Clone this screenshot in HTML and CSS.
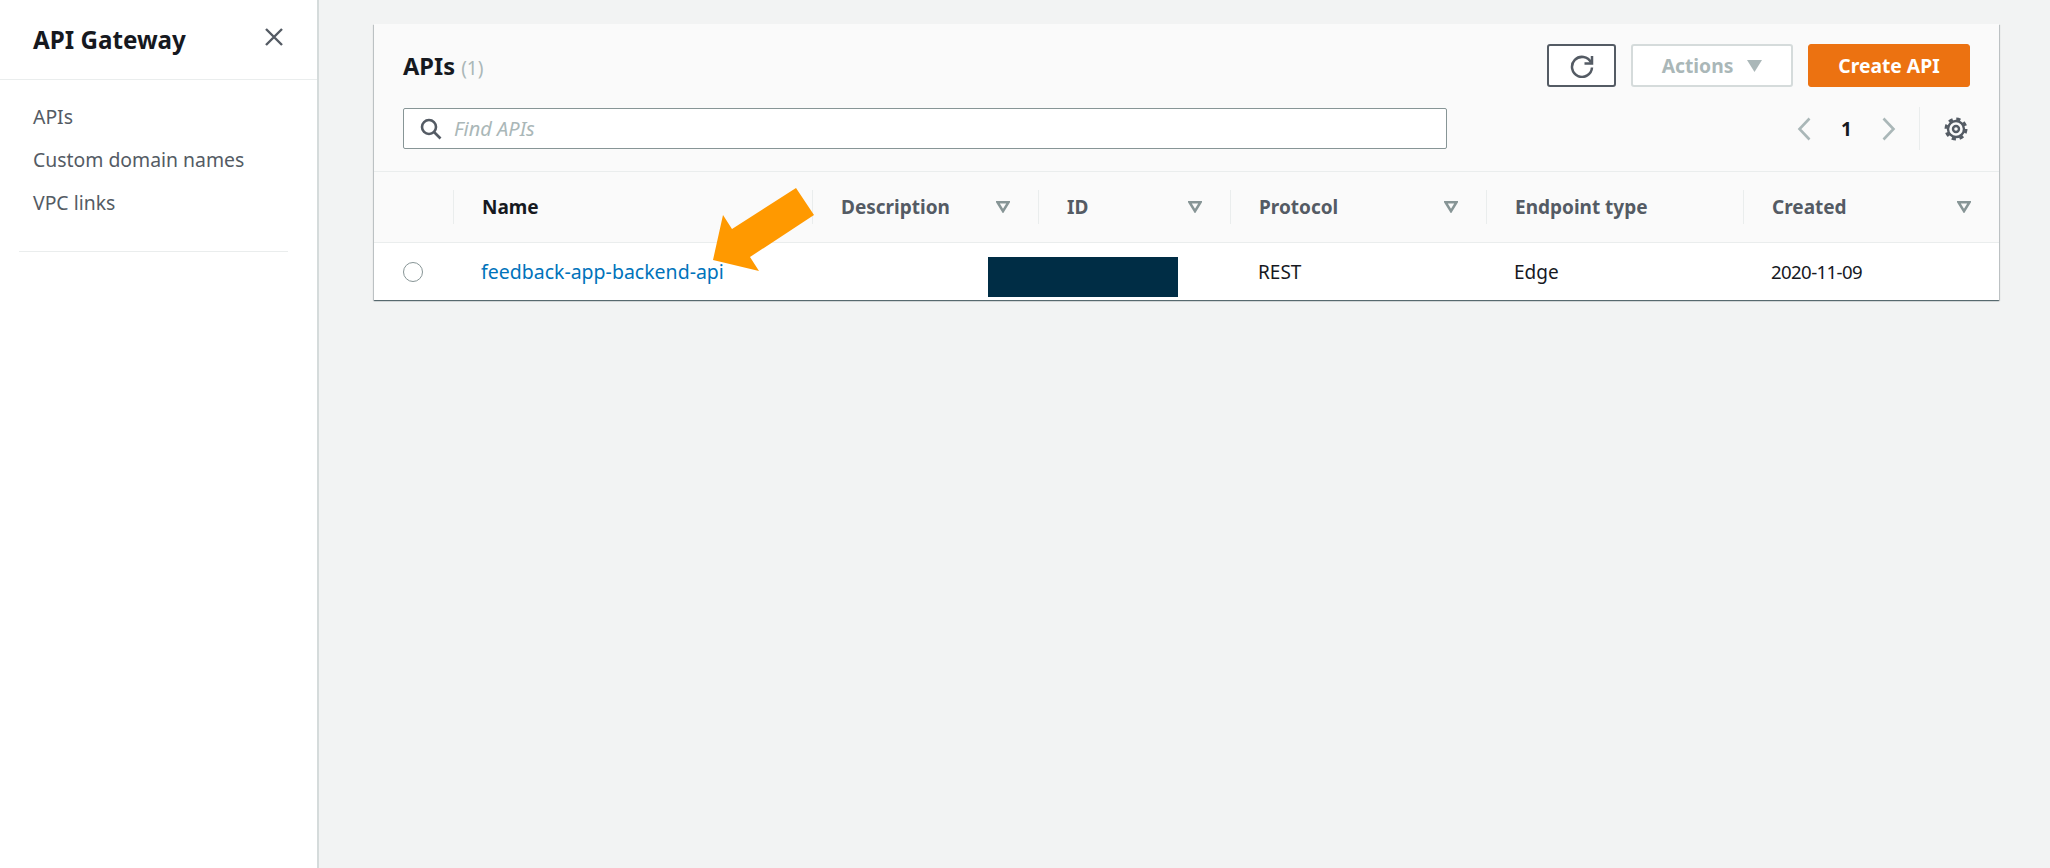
FILE: index.html
```html
<!DOCTYPE html>
<html lang="en">

<head>
  <meta charset="UTF-8">
  <title>API Gateway</title>
  <link rel="stylesheet" href="styles.css">
</head>

<body>
  <aside class="sidebar">
    <div class="side-head">
      <h2>API Gateway</h2>
      <svg class="close" viewBox="0 0 18 18"><path d="M1 1l16 16M17 1L1 17" /></svg>
    </div>
    <nav class="side-nav">
      <a href="#">APIs</a>
      <a href="#">Custom domain names</a>
      <a href="#">VPC links</a>
    </nav>
    <hr class="side-rule">
  </aside>

  <main class="content">
    <section class="panel">
      <div class="panel-head">
        <div class="head-row">
          <h1>APIs <small>(1)</small></h1>
          <div class="actions">
            <button class="btn btn-refresh">
              <svg class="ico" viewBox="0 0 24 24"><path d="M22 2v7.5h-7.5" /><path d="M21 8.5a10 10 0 1 0 1 5" /></svg>
            </button>
            <button class="btn btn-actions">Actions <svg class="caret" viewBox="0 0 15 12"><path d="M0 0h15L7.5 12z" /></svg></button>
            <button class="btn btn-primary">Create API</button>
          </div>
        </div>
        <div class="head-row search-row">
          <label class="search">
            <svg class="search-ico" viewBox="0 0 22 22"><circle cx="9" cy="9" r="7" /><path d="M14 14l6.5 6.5" /></svg>
            <input type="text" placeholder="Find APIs">
          </label>
          <div class="pager">
            <svg class="chev" viewBox="0 0 14 24"><path d="M12.5 1.5L2.5 12l10 10.5" /></svg>
            <b>1</b>
            <svg class="chev" viewBox="0 0 14 24"><path d="M1.5 1.5l10 10.5-10 10.5" /></svg>
            <span class="pager-sep"></span>
            <svg class="gear" viewBox="0 0 24 24"><circle class="gear-ring" cx="12" cy="12" r="8" /><circle class="gear-teeth" cx="12" cy="12" r="10" /><circle class="gear-hub" cx="12" cy="12" r="3" /></svg>
          </div>
        </div>
      </div>

      <table>
        <thead>
          <tr>
            <th class="col-radio"><div class="cell-head"></div></th>
            <th class="col-name"><div class="cell-head dark">Name</div></th>
            <th class="col-desc"><div class="cell-head">Description <svg class="sort" viewBox="0 0 14 12"><path d="M1.5 1.2h11L7 10.2z" /></svg></div></th>
            <th class="col-id"><div class="cell-head">ID <svg class="sort" viewBox="0 0 14 12"><path d="M1.5 1.2h11L7 10.2z" /></svg></div></th>
            <th class="col-proto"><div class="cell-head">Protocol <svg class="sort" viewBox="0 0 14 12"><path d="M1.5 1.2h11L7 10.2z" /></svg></div></th>
            <th class="col-type"><div class="cell-head">Endpoint type</div></th>
            <th class="col-created"><div class="cell-head">Created <svg class="sort" viewBox="0 0 14 12"><path d="M1.5 1.2h11L7 10.2z" /></svg></div></th>
          </tr>
        </thead>
        <tbody>
          <tr>
            <td><span class="radio"></span></td>
            <td><a href="#">feedback-app-backend-api</a></td>
            <td></td>
            <td></td>
            <td>REST</td>
            <td>Edge</td>
            <td class="date">2020-11-09</td>
          </tr>
        </tbody>
      </table>

      <!-- pasted over the screenshot -->
      <div class="redact"></div>
      <svg class="arrow" viewBox="0 0 102 84"><polygon points="84,0 102,27 38,69 47,83 1,72 11,27 20,41" /></svg>
    </section>
  </main>
</body>

</html>
```

FILE: styles.css
```css
* {
  box-sizing: border-box;
}

body {
  margin: 0;
  height: 100vh;
  overflow: hidden;
  display: flex;
  background-color: #f2f3f3;
  color: #16191f;
  font-family: "Noto Sans", Arial, sans-serif;
  font-size: 19px;
}

a {
  text-decoration: none;
}

/* sidebar */
.sidebar {
  width: 319px;
  flex: none;
  background-color: #fff;
  border-right: 2px solid #d5dbdb;
}

.side-head {
  height: 80px;
  padding: 0 33px;
  display: flex;
  align-items: center;
  justify-content: space-between;
  border-bottom: 1px solid #eaeded;
}

.side-head h2 {
  margin: 0;
  font-size: 24.2px;
  font-weight: 700;
}

.close {
  width: 18px;
  height: 18px;
  margin: -6px 1px 0 0;
  fill: none;
  stroke: #545b64;
  stroke-width: 2.4;
}

.side-nav {
  padding-top: 15px;
  display: flex;
  flex-direction: column;
}

.side-nav a {
  height: 43px;
  padding-left: 33px;
  line-height: 43px;
  font-size: 19.4px;
  color: #545b64;
}

.side-rule {
  width: 269px;
  height: 1px;
  margin: 27px 0 0 19px;
  border: 0;
  background-color: #eaeded;
}

/* panel */
.content {
  flex: 1;
  padding: 24px 51px 0 55px;
}

.panel {
  position: relative;
  height: 276px;
  background-color: #fff;
  box-shadow: 0 1px 1px rgba(0, 28, 36, .5), 1px 1px 1px rgba(0, 28, 36, .15), -1px 1px 1px rgba(0, 28, 36, .15);
}

.panel-head {
  height: 148px;
  padding: 20px 29px 0;
  background-color: #fafafa;
  border-bottom: 1px solid #eaeded;
}

.head-row {
  display: flex;
  align-items: center;
  justify-content: space-between;
}

.search-row {
  margin-top: 20px;
}

h1 {
  margin: 0;
  font-size: 23.6px;
  font-weight: 700;
}

h1 small {
  font-size: 19px;
  font-weight: 400;
  color: #aab7b8;
}

.actions {
  display: flex;
  gap: 15px;
}

.btn {
  height: 43px;
  border-radius: 3px;
  font-family: inherit;
  font-size: 19.3px;
  font-weight: 700;
  display: flex;
  align-items: center;
  justify-content: center;
  gap: 14px;
}

.btn-refresh {
  width: 69px;
  background-color: #fff;
  border: 2px solid #545b64;
}

.ico {
  width: 24px;
  height: 24px;
  fill: none;
  stroke: #545b64;
  stroke-width: 2.5;
}

.btn-actions {
  width: 162px;
  background-color: #fff;
  border: 2px solid #d5dbdb;
  color: #aab7b8;
}

.caret {
  width: 15px;
  height: 12px;
  fill: #aab7b8;
}

.btn-primary {
  width: 162px;
  background-color: #ec7211;
  border: 1px solid #ec7211;
  color: #fff;
}

.search {
  width: 1044px;
  height: 41px;
  padding-left: 16px;
  display: flex;
  align-items: center;
  gap: 10px;
  background-color: #fff;
  border: 1px solid #879596;
  border-radius: 2px;
}

.search-ico {
  width: 22px;
  height: 22px;
  fill: none;
  stroke: #545b64;
  stroke-width: 2.6;
}

.search input {
  flex: 1;
  border: 0;
  outline: 0;
  background: none;
  font-family: inherit;
  font-size: 20px;
}

.search input::placeholder {
  color: #aab7b8;
  font-style: italic;
  opacity: 1;
}

.pager {
  display: flex;
  align-items: center;
  height: 43px;
  margin-right: 2px;
}

.chev {
  width: 14px;
  height: 24px;
  fill: none;
  stroke: #aab7b8;
  stroke-width: 2.6;
}

.pager b {
  width: 71px;
  text-align: center;
  font-size: 19px;
}

.pager-sep {
  width: 1px;
  height: 43px;
  margin: 0 24px 0 23px;
  background-color: #eaeded;
}

.gear {
  width: 24px;
  height: 24px;
  fill: none;
  stroke: #545b64;
}

.gear-ring,
.gear-hub {
  stroke-width: 2.4;
}

.gear-teeth {
  stroke-width: 3;
  stroke-dasharray: 4.2 3.65;
}

/* table */
table {
  width: 100%;
  table-layout: fixed;
  border-collapse: collapse;
}

.col-radio {
  width: 79px;
}

.col-name {
  width: 359px;
}

.col-desc {
  width: 226px;
}

.col-id {
  width: 192px;
}

.col-proto {
  width: 256px;
}

.col-type {
  width: 257px;
}

th {
  height: 70px;
  padding: 0;
  background-color: #fafafa;
  border-bottom: 1px solid #eaeded;
  text-align: left;
}

.cell-head {
  height: 34px;
  padding: 0 28px;
  display: flex;
  align-items: center;
  justify-content: space-between;
  border-left: 1px solid #eaeded;
  color: #545b64;
  font-weight: 700;
}

.col-radio .cell-head {
  border-left: 0;
}

.dark {
  color: #16191f;
}

.sort {
  width: 14px;
  height: 12px;
  fill: none;
  stroke: #879596;
  stroke-width: 2.5;
}

td {
  height: 58px;
  padding: 1px 0 0 28px;
}

td:first-child {
  padding-left: 29px;
}

td a {
  font-size: 19.5px;
  color: #0073bb;
}

td.date {
  font-size: 18.6px;
  letter-spacing: -.6px;
}

.radio {
  display: block;
  width: 20px;
  height: 20px;
  border: 1px solid #879596;
  border-radius: 50%;
}

.redact {
  position: absolute;
  left: 614px;
  top: 233px;
  width: 190px;
  height: 40px;
  background-color: #002d45;
}

.arrow {
  position: absolute;
  left: 338px;
  top: 164px;
  width: 102px;
  height: 84px;
  fill: #ff9900;
}
```
